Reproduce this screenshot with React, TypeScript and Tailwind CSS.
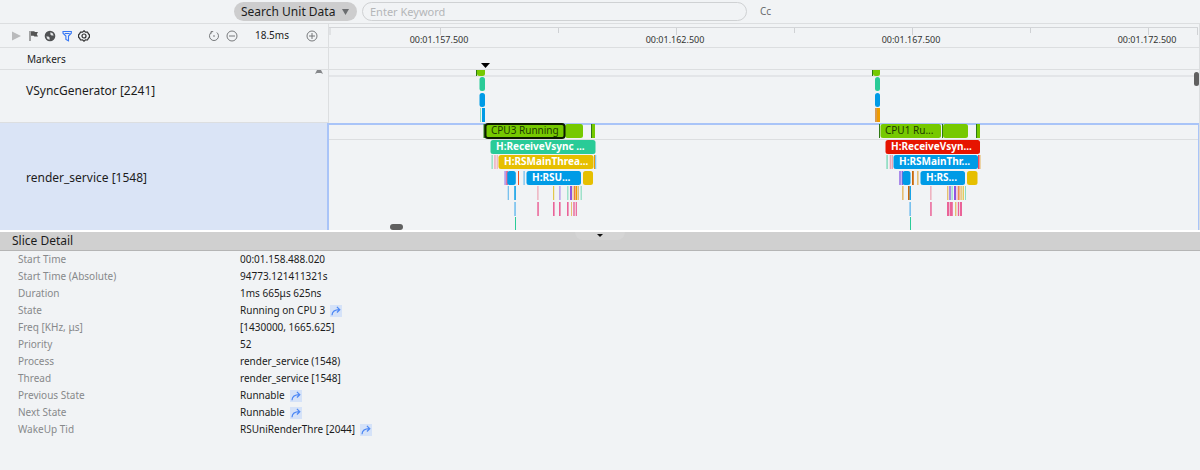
import { useState } from "react";

type Slice = {
  x: number;
  w: number;
  row: number;
  color: string;
  label?: string;
  textX?: number;
  selected?: boolean;
};

// slice x values count from the window edge, the lanes start after the sidebar
const LANE_LEFT = 329;

const GREEN = "#76c900";
const DARK = "#2f7a14";
const TEAL = "#2acb97";
const BLUE = "#009be6";
const YELLOW = "#e6bf00";
const RED = "#e61400";
const ORANGE = "#ef9c00";
const PINK = "#ea6398";
const ROSE = "#eda3b4";
const MINT = "#8bdcc0";
const SKY = "#6cbcee";
const VIOLET = "#a98bea";
const PURPLE = "#8f55e0";
const TAN = "#e6bf72";
const RUST = "#c9690a";
const FLAME = "#f25022";

const vsyncSlices: Slice[] = [
  { x: 476, w: 1, row: -1, color: DARK },
  { x: 477, w: 8, row: -1, color: GREEN },
  { x: 479.5, w: 5.5, row: 0, color: TEAL },
  { x: 479.5, w: 5.5, row: 1, color: BLUE },
  { x: 480, w: 1, row: 2, color: MINT },
  { x: 482, w: 3, row: 2, color: BLUE },
  { x: 872, w: 1, row: -1, color: DARK },
  { x: 873, w: 7, row: -1, color: GREEN },
  { x: 875, w: 5, row: 0, color: TEAL },
  { x: 875, w: 5, row: 1, color: BLUE },
  { x: 875, w: 2, row: 2, color: "#d99a4e" },
  { x: 877, w: 3, row: 2, color: ORANGE },
];

const renderSlices: Slice[] = [
  { x: 483.5, w: 1.5, row: 0, color: DARK },
  { x: 565, w: 18, row: 0, color: GREEN },
  { x: 591, w: 1, row: 0, color: DARK },
  { x: 592, w: 3, row: 0, color: GREEN },
  { x: 485.5, w: 79, row: 0, color: GREEN, label: "CPU3 Running", textX: 491, selected: true },
  { x: 490.5, w: 105, row: 1, color: TEAL, label: "H:ReceiveVsync ...", textX: 496 },
  { x: 491.5, w: 1.3, row: 2, color: MINT },
  { x: 494.3, w: 1.3, row: 2, color: ROSE },
  { x: 496.7, w: 1, row: 2, color: ROSE },
  { x: 498.5, w: 95, row: 2, color: YELLOW, label: "H:RSMainThrea...", textX: 504 },
  { x: 594, w: 1, row: 2, color: ORANGE },
  { x: 595.2, w: 1, row: 2, color: SKY },
  { x: 504.4, w: 1.4, row: 3, color: VIOLET },
  { x: 506.3, w: 1.5, row: 3, color: "#e0407a" },
  { x: 507.3, w: 8.5, row: 3, color: BLUE },
  { x: 518, w: 1, row: 3, color: FLAME },
  { x: 523.5, w: 1.2, row: 3, color: SKY },
  { x: 526.5, w: 54.5, row: 3, color: BLUE, label: "H:RSU...", textX: 532 },
  { x: 583, w: 10, row: 3, color: YELLOW },
  { x: 507.7, w: 1.2, row: 4, color: SKY },
  { x: 514.3, w: 1.5, row: 4, color: BLUE },
  { x: 537.3, w: 1.2, row: 4, color: ROSE },
  { x: 553, w: 1.2, row: 4, color: "#e2c84c" },
  { x: 559.3, w: 1.2, row: 4, color: VIOLET },
  { x: 567.2, w: 1.2, row: 4, color: MINT },
  { x: 570, w: 2, row: 4, color: PURPLE },
  { x: 572.6, w: 0.8, row: 4, color: TAN },
  { x: 573.9, w: 1.5, row: 4, color: "#f07a42" },
  { x: 575.7, w: 1.3, row: 4, color: ORANGE },
  { x: 577.4, w: 1.6, row: 4, color: TAN },
  { x: 580.6, w: 1.2, row: 4, color: MINT },
  { x: 514.3, w: 1.5, row: 5, color: SKY },
  { x: 537.3, w: 1.5, row: 5, color: PINK },
  { x: 553, w: 1.6, row: 5, color: PINK },
  { x: 559, w: 1.6, row: 5, color: PINK },
  { x: 567, w: 1.6, row: 5, color: PINK },
  { x: 571, w: 1, row: 5, color: TAN },
  { x: 573.3, w: 1.4, row: 5, color: PINK },
  { x: 575.7, w: 1.2, row: 5, color: PINK },
  { x: 515, w: 1, row: 6, color: TEAL },

  { x: 879, w: 1, row: 0, color: DARK },
  { x: 880.5, w: 60.5, row: 0, color: GREEN, label: "CPU1 Ru...", textX: 885 },
  { x: 942, w: 1, row: 0, color: DARK },
  { x: 943, w: 25, row: 0, color: GREEN },
  { x: 976, w: 1, row: 0, color: DARK },
  { x: 977, w: 3, row: 0, color: GREEN },
  { x: 885.5, w: 94.5, row: 1, color: RED, label: "H:ReceiveVsyn...", textX: 891 },
  { x: 886.3, w: 1.6, row: 2, color: MINT },
  { x: 889.7, w: 1.3, row: 2, color: ROSE },
  { x: 891.5, w: 1.5, row: 2, color: ROSE },
  { x: 893.5, w: 84.5, row: 2, color: BLUE, label: "H:RSMainThr...", textX: 899 },
  { x: 978, w: 1.6, row: 2, color: "#f04a5a" },
  { x: 979.8, w: 0.8, row: 2, color: TAN },
  { x: 899, w: 2, row: 3, color: VIOLET },
  { x: 901.6, w: 1.4, row: 3, color: PURPLE },
  { x: 902.5, w: 8, row: 3, color: BLUE },
  { x: 912, w: 1.8, row: 3, color: RUST },
  { x: 917, w: 1.6, row: 3, color: TAN },
  { x: 920.5, w: 44.5, row: 3, color: BLUE, label: "H:RS...", textX: 926 },
  { x: 967, w: 10.5, row: 3, color: YELLOW },
  { x: 902, w: 1.6, row: 4, color: TAN },
  { x: 908, w: 1.7, row: 4, color: RUST },
  { x: 909.7, w: 1.2, row: 4, color: BLUE },
  { x: 930.2, w: 1.3, row: 4, color: ROSE },
  { x: 947, w: 1.4, row: 4, color: TAN },
  { x: 949, w: 2, row: 4, color: VIOLET },
  { x: 951.5, w: 1.2, row: 4, color: MINT },
  { x: 954, w: 2, row: 4, color: PURPLE },
  { x: 956.6, w: 1, row: 4, color: ROSE },
  { x: 958, w: 1.6, row: 4, color: "#ee8f4e" },
  { x: 960.4, w: 1.4, row: 4, color: TAN },
  { x: 962.6, w: 1.3, row: 4, color: "#e2c84c" },
  { x: 965, w: 1, row: 4, color: MINT },
  { x: 909.4, w: 1.5, row: 5, color: SKY },
  { x: 930.2, w: 1.5, row: 5, color: PINK },
  { x: 947, w: 2, row: 5, color: PINK },
  { x: 949.6, w: 3.2, row: 5, color: PINK },
  { x: 955, w: 1.4, row: 5, color: TAN },
  { x: 957.8, w: 1.4, row: 5, color: PINK },
  { x: 960, w: 2, row: 5, color: PINK },
  { x: 910, w: 1, row: 6, color: TEAL },
];

const ticks = [
  { x: 440, label: "00:01.157.500" },
  { x: 558 },
  { x: 676, label: "00:01.162.500" },
  { x: 794 },
  { x: 912, label: "00:01.167.500" },
  { x: 1030 },
  { x: 1148, label: "00:01.172.500" },
];

const details = [
  { name: "Start Time", value: "00:01.158.488.020" },
  { name: "Start Time (Absolute)", value: "94773.121411321s" },
  { name: "Duration", value: "1ms 665μs 625ns" },
  { name: "State", value: "Running on CPU 3", jump: true },
  { name: "Freq [KHz, μs]", value: "[1430000, 1665.625]" },
  { name: "Priority", value: "52" },
  { name: "Process", value: "render_service (1548)" },
  { name: "Thread", value: "render_service [1548]" },
  { name: "Previous State", value: "Runnable", jump: true },
  { name: "Next State", value: "Runnable", jump: true },
  { name: "WakeUp Tid", value: "RSUniRenderThre [2044]", jump: true },
];

function Slices({ slices, top, pitch }: { slices: Slice[]; top: number; pitch: number }) {
  return (
    <g transform={`translate(${-LANE_LEFT} 0)`}>
      {slices.map((s, i) => {
        const y = Math.round(top + s.row * pitch);
        return (
          <g key={i}>
            <rect
              x={s.x}
              y={y}
              width={s.w}
              height={14}
              rx={s.w > 4 ? 2.5 : 0}
              fill={s.color}
              stroke={s.selected ? "#0b1a00" : "none"}
              strokeWidth={s.selected ? 2 : 0}
            />
            {s.label && (
              <text
                x={s.textX}
                y={y + 10}
                fontSize={10}
                fontWeight={s.row === 0 ? 400 : 700}
                fill={s.row === 0 ? "#1d3a00" : "#fff"}
              >
                {s.label}
              </text>
            )}
          </g>
        );
      })}
    </g>
  );
}

function Ruler() {
  return (
    <svg className="mt-[3px] h-5 w-full" fill="none">
      <path d="M1 8V1" stroke="#cfd1d4" />
      <path d="M0 .5H869" stroke="#d3d5d8" />
      <path d="M868.5 8V1" stroke="#cfd1d4" />
      <g transform={`translate(${-LANE_LEFT} 0)`}>
        {ticks.map((t) => (
          <g key={t.x}>
            <path d={`M${t.x + 0.5} 1v${t.label ? 7 : 5}`} stroke="#cfd1d4" />
            {t.label && (
              <text x={t.x - 1} y={16} fontSize={9} textAnchor="middle" fill="#333">
                {t.label}
              </text>
            )}
          </g>
        ))}
      </g>
    </svg>
  );
}

function Toolbar() {
  return (
    <div className="flex h-6 items-center border-b border-[#dcdee0] pl-[10px] pr-[10px]">
      <div className="flex gap-[5px]">
        <button aria-label="Play">
          <svg width="12" height="12" viewBox="0 0 12 12">
            <path d="M2 1.500v9L11 6z" fill="#b9babc" />
          </svg>
        </button>
        <button aria-label="Add flag">
          <svg width="12" height="12" viewBox="0 0 12 12" fill="#555">
            <path d="M2.500 1h1v10h-1zM4 1.200h3.200l.8.800h3L9.800 4.300 11 6.600H7.400l-.8-.8H4z" />
          </svg>
        </button>
        <button aria-label="Navigation">
          <svg width="12" height="12" viewBox="0 0 12 12">
            <circle cx="6" cy="6" r="5.300" fill="#505254" />
            <path d="M6.400 2.300a4 4 0 0 1 3.300 3.300H7.600L6.400 4.400zM5.600 9.700a4 4 0 0 1-3.300-3.300h2.100l1.200 1.200z" fill="#e4e6e8" />
            <circle cx="6" cy="6" r="1" fill="#505254" />
          </svg>
        </button>
        <button aria-label="Filter">
          <svg width="12" height="12" viewBox="0 0 12 12" fill="none" stroke="#3577f5" strokeWidth="1.100">
            <path d="M2 1.500h8.300v1.700L7.500 6v4.800L4.900 9.500V6L2 3.200z" />
            <path d="M3.700 3.500h5" />
          </svg>
        </button>
        <button aria-label="Settings">
          <svg width="12" height="12" viewBox="0 0 12 12" fill="none" stroke="#333">
            <path
              d="M6 .8l1.500 1.300 2-.1.900 1.800 1 .9v2.600l-1 .9-.9 1.800-2-.1L6 11.200 4.500 9.900l-2 .1-.9-1.800-1-.9V4.700l1-.9.900-1.800 2 .1z"
              strokeWidth="1.200"
            />
            <circle cx="6" cy="6" r="2" strokeWidth="1.200" />
          </svg>
        </button>
      </div>
      <div className="ml-auto flex items-center">
        <button aria-label="Reset zoom">
          <svg width="12" height="12" viewBox="0 0 12 12" fill="none" stroke="#6a6c6e">
            <path d="M3.200 2.500A4.500 4.500 0 1 0 8.800 2.500M5.200 1.600H3v2.200" strokeWidth=".9" />
            <circle cx="6" cy="6" r=".8" fill="#6a6c6e" stroke="none" />
          </svg>
        </button>
        <button aria-label="Zoom out" className="ml-[6px]">
          <svg width="12" height="12" viewBox="0 0 12 12" fill="none" stroke="#6a6c6e" strokeWidth=".9">
            <circle cx="6" cy="6" r="5" />
            <path d="M3 6h6" />
          </svg>
        </button>
        <span className="w-[68px] text-center text-[10px] text-[#222]">18.5ms</span>
        <button aria-label="Zoom in">
          <svg width="12" height="12" viewBox="0 0 12 12" fill="none" stroke="#6a6c6e" strokeWidth=".9">
            <circle cx="6" cy="6" r="5" />
            <path d="M3 6h6M6 3v6" />
          </svg>
        </button>
      </div>
    </div>
  );
}

function JumpButton({ label }: { label: string }) {
  return (
    <button aria-label={label} className="ml-[5px] flex size-3 items-center justify-center bg-[#d5e2f8]">
      <svg width="12" height="12" viewBox="0 0 12 12" fill="none" stroke="#4d88f5" strokeWidth="1.200">
        <path d="M2 10.200C2.200 6.500 4.500 4.800 9.600 4.700M6.900 1.900l2.900 2.800-2.900 2.800" />
      </svg>
    </button>
  );
}

export default function App() {
  const [keyword, setKeyword] = useState("");

  return (
    <div className="min-h-screen bg-[#f1f3f5] font-['Noto_Sans','Open_Sans',sans-serif] text-[#1c1c1c]">
      <header className="flex h-6 items-center border-b border-[#dcdee0] pl-[234px]">
        <div className="relative flex">
          <select
            aria-label="Search scope"
            className="h-[19px] w-[123px] appearance-none rounded-full bg-[#cdcdce] pl-[7px] text-xs leading-[18px]"
          >
            <option>Search Unit Data</option>
          </select>
          <svg className="pointer-events-none absolute right-2 top-[7px]" width="7" height="6">
            <path d="M0 0h7L3.500 6z" fill="#6b6d70" />
          </svg>
        </div>
        <input
          aria-label="Keyword"
          placeholder="Enter Keyword"
          value={keyword}
          onChange={(e) => setKeyword(e.target.value)}
          className="ml-[5px] h-[19px] w-[385px] rounded-full border border-[#cfd1d3] px-[7px] text-[11px] placeholder:text-[#b4b6b8]"
        />
        <button className="ml-[13px] text-[10px] text-[#6a6c6e]">Cc</button>
      </header>

      <main className="relative border-r border-[#dcdee0]">
        <div className="grid grid-cols-[328px_1fr]">
          <Toolbar />
          <div className="h-6 border-b border-l border-[#dcdee0]">
            <Ruler />
          </div>

          <div className="flex h-[22px] items-center border-b border-[#dcdee0] pl-[27px] pt-[2px] text-[10px]">Markers</div>
          <div className="h-[22px] border-b border-l border-[#dcdee0]">
            <svg className="h-full w-full">
              <path d="M152 15h9l-4.500 5z" fill="#000" />
            </svg>
          </div>

          <div className="relative flex h-[53px] items-center border-b border-[#dcdee0] pb-[10px] pl-[26px] text-xs">
            VSyncGenerator [2241]
            <button aria-label="Collapse" className="absolute right-[5px] top-0 flex">
              <svg width="8" height="4">
                <path d="M0 4L2 0h4l2 4-2-1H2z" fill="#85878a" />
              </svg>
            </button>
          </div>
          <div className="h-[53px] border-l border-[#dcdee0]">
            <svg className="h-full w-full">
              <path d="M0 6H869" stroke="#e3e5e8" strokeWidth="2" />
              <Slices slices={vsyncSlices} top={7} pitch={15.5} />
            </svg>
          </div>

          <div className="flex h-[107px] items-center border-r border-[#a9c4f8] bg-[#dae4f6] pl-[26px] pt-[2px] text-xs">
            render_service [1548]
          </div>
          <div className="h-[107px] border-x border-t-2 border-[#a9c4f8]">
            <svg className="h-full w-full overflow-visible">
              <path d="M0 14.500H869" stroke="#dcdee0" />
              <Slices slices={renderSlices} top={-1} pitch={15.5} />
            </svg>
          </div>
        </div>
        <div className="absolute right-0 top-12 h-[14px] w-[5px] rounded-full bg-[#606060]" />
        <div className="absolute bottom-0 left-[390px] h-[6px] w-[13px] rounded-full bg-[#606060]" />
      </main>

      <section>
        <div className="relative flex h-[21px] items-center border-b border-t-2 border-b-[#b5b5b5] border-t-white bg-[#d0d0d0] pl-3">
          <h2 className="text-xs">Slice Detail</h2>
          <button
            aria-label="Collapse details"
            className="absolute left-1/2 top-0 flex h-2 w-[50px] -translate-x-1/2 justify-center rounded-b-full bg-[#d5d5d5] pt-[2px]"
          >
            <svg width="6" height="3">
              <path d="M0 0h6L3 3z" fill="#111" />
            </svg>
          </button>
        </div>
        <table className="w-full text-left text-[10px] leading-[17px]">
          <tbody>
            {details.map((d) => (
              <tr key={d.name} className="h-[17px]">
                <th scope="row" className="w-[240px] p-0 pl-[18px] font-normal text-[#87898b]">
                  {d.name}
                </th>
                <td className="p-0">
                  <div className="flex items-center">
                    {d.value}
                    {d.jump && <JumpButton label={`Go to ${d.value}`} />}
                  </div>
                </td>
              </tr>
            ))}
          </tbody>
        </table>
      </section>
    </div>
  );
}
